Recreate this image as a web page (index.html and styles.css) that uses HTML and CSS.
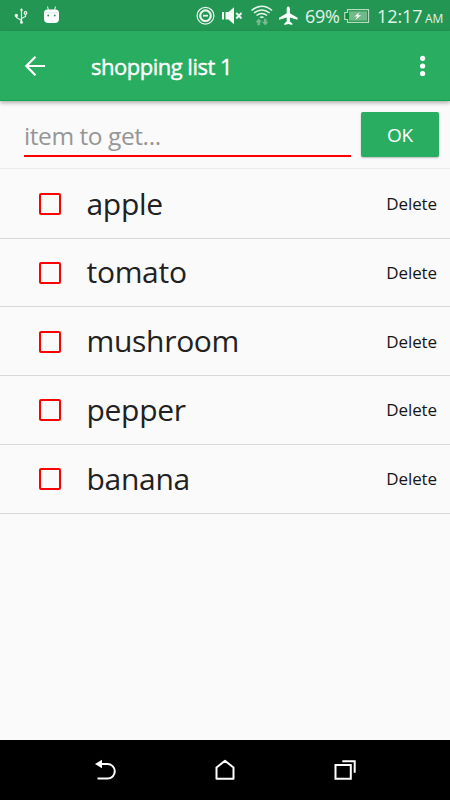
FILE: index.html
```html
<!DOCTYPE html>
<html lang="en">
<head>
<meta charset="utf-8">
<title>shopping list 1</title>
<link rel="stylesheet" href="styles.css">
</head>
<body>
<div class="screen">
  <div class="status">
    <svg class="status-icons" width="300" height="31" viewBox="0 0 300 31" fill="none" stroke="#e9f5ed">
      <g stroke-width="1.2"><path d="M21.500 9v13M16.500 15.500v2l5 3M25.500 14v2.500l-4 2"/><circle cx="25.500" cy="13" r="1.300"/><circle cx="16.300" cy="15.500" r="1.100" fill="#e9f5ed"/><path d="M19.800 10.500l1.700-2.500 1.700 2.500z" fill="#e9f5ed" stroke="none"/><circle cx="21.500" cy="22.300" r="1.500" fill="#e9f5ed" stroke="none"/></g>
      <path d="M47.500 6.500l1 4M55.500 6.500l-1 4" stroke-width="1"/>
      <path d="M44 13q0-3.500 3.500-3.500h8q3.500 0 3.500 3.500v6q0 4-4.500 4h-6q-4.500 0-4.500-4z" fill="#fff" stroke="none"/>
      <path d="M45 12.800h13" stroke="#c4e2ce" stroke-width=".8"/>
      <circle cx="48.200" cy="15.500" r=".9" fill="#239653" stroke="none"/><circle cx="54.800" cy="15.500" r=".9" fill="#239653" stroke="none"/>
      <circle cx="205.500" cy="15.700" r="8.400" stroke-width="1.300"/><circle cx="205.500" cy="15.700" r="5.300" stroke-width="2.200"/><path d="M203 15.700h5" stroke-width="1.800"/>
      <path d="M222 12h2v7.500h-2zM225.500 12h3l5.500-4.800v17l-5.500-4.700h-3z" fill="#f4faf6" stroke="none"/><path d="M236.300 13l5.200 5.500M241.500 13l-5.200 5.500" stroke-width="2"/>
      <g stroke-width="1.500"><path d="M251.500 10.500q10.300-8.500 20.600 0M254 13q7.800-6.200 15.600 0M256.500 15.500q5.300-3.900 10.600 0"/></g><path d="M259.300 17.200q2.500-1.700 5 0l-2.500 1z" fill="#e9f5ed" stroke="none"/>
      <path d="M255.500 22.200l3.200-3.700 3.200 3.700h-2v3h-2.400v-3zM262 21.800h2v-3h2.400v3h2l-3.200 3.700z" fill="#79bb91" stroke="none"/>
      <path d="M288.300 6.500c1 0 1.600 1 1.600 2.500v4.200l7.600 4.500v2l-7.600-2.200v4l2.400 2v1.500l-4-1-4 1v-1.500l2.400-2v-4l-7.600 2.200v-2l7.600-4.500v-4.200c0-1.500.6-2.500 1.600-2.500z" fill="#fff" stroke="none"/>
    </svg>
    <span class="percent">69%</span>
    <svg class="battery" width="26" height="14" viewBox="0 0 26 14"><path d="M3.500.7h21v12.600h-21V10.500h-2.800v-7h2.800z" fill="#128a3c" stroke="#b5dbc1" stroke-width="1.200"/><path d="M5 2.300h18v9.400h-18z" fill="#71b98b"/><path d="M15.500 3.200l-5.300 4.300h3.200l-2.200 3.500 6-4.800h-3.300z" fill="#fff"/></svg>
    <span class="clock">12:17</span><span class="ampm">AM</span>
  </div>
  <header class="appbar">
    <svg class="back" width="22" height="22" viewBox="0 0 22 22" fill="none" stroke="#fff" stroke-width="2.200"><path d="M21 11H2.500M11.500 1.800L2.300 11l9.200 9.200"/></svg>
    <h1>shopping list 1</h1>
    <svg class="more" width="6" height="22" viewBox="0 0 6 22" fill="#fff"><circle cx="2.600" cy="3.300" r="2.600"/><circle cx="2.600" cy="11" r="2.600"/><circle cx="2.600" cy="18.500" r="2.600"/></svg>
  </header>
  <div class="entry">
    <div class="field">item to get...</div>
    <div class="ok">OK</div>
  </div>
  <ul class="list">
    <li><span class="box"></span><span class="name">apple</span><span class="delete">Delete</span></li>
    <li><span class="box"></span><span class="name">tomato</span><span class="delete">Delete</span></li>
    <li><span class="box"></span><span class="name">mushroom</span><span class="delete">Delete</span></li>
    <li><span class="box"></span><span class="name">pepper</span><span class="delete">Delete</span></li>
    <li><span class="box"></span><span class="name">banana</span><span class="delete">Delete</span></li>
  </ul>
  <nav class="nav">
    <svg width="24" height="24" viewBox="0 0 24 24" fill="none" stroke="#fff" stroke-width="2"><path d="M6 6h8.500a7.300 7.300 0 0 1 0 14.600H4.500"/><path d="M2 6L9 1.800v8.400z" fill="#fff" stroke="none"/></svg>
    <svg width="24" height="24" viewBox="0 0 24 24" fill="none" stroke="#fff" stroke-width="2" stroke-linejoin="round"><path d="M3.500 20.700V9.500L12 2.800l8.500 6.700v11.200z"/></svg>
    <svg width="24" height="24" viewBox="0 0 24 24" fill="none" stroke="#fff" stroke-width="2"><path d="M2.500 7h15.300v13.700H2.500z"/><path d="M9.300 3.300h12.400v11.500"/></svg>
  </nav>
</div>
</body>
</html>
```
FILE: styles.css
```css
* { box-sizing: border-box; }
body { margin: 0; font-family: "Open Sans", "Noto Sans", sans-serif; }
.screen { width: 450px; height: 800px; display: flex; flex-direction: column; background: #fafafa; overflow: hidden; }
.status { height: 31px; flex: none; display: flex; align-items: center; background: #239653; color: #e4f3e9; white-space: nowrap; }
.status-icons { flex: none; }
.percent { width: 40px; margin-left: 5px; font-size: 18px; letter-spacing: -0.3px; line-height: 31px; padding-top: 1px; }
.battery { flex: none; margin-left: -1px; }
.clock { margin-left: 7px; width: 46px; font-size: 18px; letter-spacing: -0.1px; padding-top: 1px; }
.ampm { margin-left: 2px; font-size: 12px; letter-spacing: -0.2px; padding-top: 5px; }
.appbar { position: relative; height: 70px; flex: none; display: flex; align-items: center; padding: 0 24px; background: #29ae61; border-bottom: 1px solid #0da750; box-shadow: 0 2px 4px rgba(0,0,0,.3); color: #fff; }
.back { margin-top: 1px; }
h1 { margin: 1px 0 0 45px; font-size: 22px; font-weight: 500; letter-spacing: -0.5px; line-height: 30px; -webkit-text-stroke: 0.4px #fff; }
.more { margin: 1px 0 0 auto; }
.entry { height: 68px; flex: none; display: flex; padding: 11px 11px 0 24px; border-bottom: 1px solid #ebebeb; }
.field { width: 327px; height: 45px; border-bottom: 2px solid #f00; color: #969696; font-size: 24.5px; letter-spacing: -0.43px; line-height: 48px; }
.ok { width: 78px; height: 45px; margin-left: auto; border-radius: 2px; background: #29ae61; color: #fff; font-size: 19px; letter-spacing: -0.2px; line-height: 46px; text-align: center; box-shadow: 0 1px 2px rgba(0,0,0,.25); }
.list { flex: 1; margin: 0; padding: .8px 0 0; list-style: none; }
.list li { display: flex; align-items: center; height: 68.75px; padding: 0 13px 0 39px; border-bottom: 1px solid #d8d8d8; color: #212121; }
.box { width: 22px; height: 22px; margin-top: 1px; border: 2px solid #f00; border-radius: 2px; }
.name { margin-left: 25.5px; font-size: 30px; letter-spacing: -0.3px; line-height: 40px; }
.delete { margin-left: auto; font-size: 17px; letter-spacing: -0.1px; color: #161616; }
.nav { height: 60px; flex: none; display: flex; align-items: center; justify-content: center; gap: 96px; background: #000; }
```
